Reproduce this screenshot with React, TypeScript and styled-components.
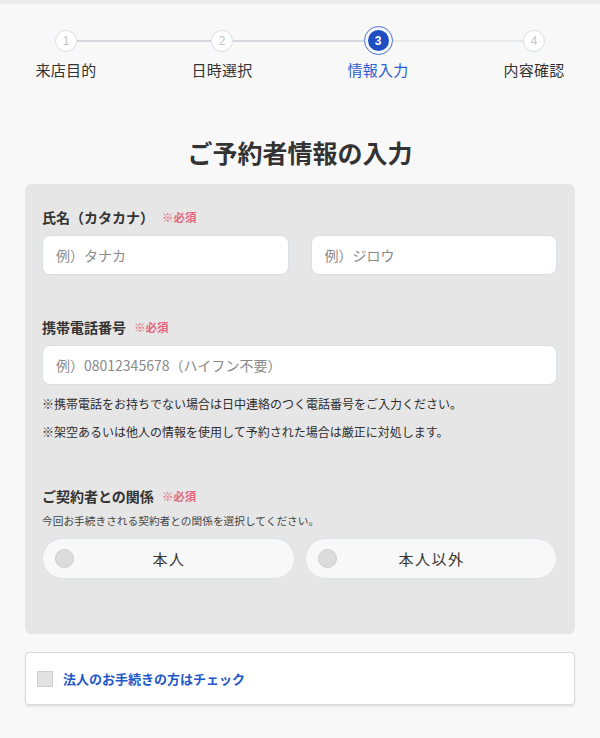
import styled, { createGlobalStyle, css } from "styled-components";

const GlobalStyle = createGlobalStyle`
  html, body {
    margin: 0;
    padding: 0;
    background: #f8f8f8;
    overflow-x: hidden;
  }
  body {
    font-family: "Noto Sans CJK JP", "Noto Sans", sans-serif;
    color: #333;
  }
  * {
    box-sizing: border-box;
  }
`

const steps = [ '来店目的', '日時選択', '情報入力', '内容確認' ]
const current = 3

const Page = styled.div`
  min-height: 738px;
  background: #f8f8f8;
  padding-bottom: 34px;
`

const TopBar = styled.div`
  height: 4px;
  background: #ebebeb;
`

const Stepper = styled.ol`
  display: grid;
  grid-template-columns: repeat(4, 156px);
  justify-content: center;
  margin: 0;
  padding: 22px 0 0;
  list-style: none;
`

const Step = styled.li`
  display: flex;
  flex-direction: column;
  align-items: center;
`

const Track = styled.div`
  display: flex;
  align-items: center;
  width: 100%;
  height: 29px;
`

const Line = styled.span<{ tone: 'done' | 'todo' | 'none' }>`
  flex: 1;
  height: 2px;
  background: ${({ tone }) => tone === 'done' ? '#d4d9df' : tone === 'todo' ? '#e7e8ea' : 'transparent'};
`

const Dot = styled.span<{ active: boolean }>`
  display: inline-flex;
  align-items: center;
  justify-content: center;
  border-radius: 50%;
  font-family: "Liberation Sans", Arial, sans-serif;
  font-size: 12px;
  flex-shrink: 0;

  ${({ active }) => active ? css`
    width: 29px;
    height: 29px;
    padding: 3px;
    border: 1px solid #4b72d8;
    background: #1f4ec3;
    background-clip: content-box;
    color: #fff;
    font-weight: bold;
  ` : css`
    width: 22px;
    height: 22px;
    border: 1.5px solid #d8dfe8;
    background: #fff;
    color: #c4c4c4;
  `}
`

const StepLabel = styled.span<{ active: boolean }>`
  margin-top: 5px;
  font-size: 15px;
  line-height: 20px;
  letter-spacing: 0.2px;
  color: ${({ active }) => active ? '#2b5fcf' : '#333'};
`

const Title = styled.h1`
  margin: 54px 0 14px;
  text-align: center;
  font-size: 25px;
  line-height: 36px;
  font-weight: bold;
  color: #333;
`

const Card = styled.section`
  margin: 0 25px;
  padding: 23px 18px 55px 17px;
  background: #e6e6e6;
  border-radius: 6px;
`

const Field = styled.div<{ gap?: number }>`
  margin-top: ${({ gap }) => gap ?? 0}px;
`

const LabelRow = styled.div`
  display: flex;
  align-items: center;
  gap: 8px;
  height: 20px;
  margin-bottom: 8px;
`

const Label = styled.span`
  font-size: 14px;
  font-weight: bold;
  color: #333;
`

const Required = styled.span`
  font-size: 11.5px;
  font-weight: bold;
  color: #e3677e;
`

const Pair = styled.div<{ gap: number }>`
  display: grid;
  grid-template-columns: 1fr 1fr;
  gap: ${({ gap }) => gap}px;
`

const TextInput = styled.input`
  display: block;
  width: 100%;
  height: 40px;
  padding: 0 13px;
  border: 1px solid #d9dfe6;
  border-radius: 8px;
  background: #fff;
  font-family: inherit;
  font-size: 14px;
  color: #333;
  outline: none;

  &::placeholder {
    color: #8a8a8a;
  }
`

const Note = styled.p`
  margin: 10px 0 0;
  font-size: 12px;
  line-height: 18px;
  color: #2e2e2e;
`

const Hint = styled.p`
  margin: -1px 0 9px;
  font-size: 10.7px;
  line-height: 16px;
  color: #444;
`

const Choice = styled.label`
  display: grid;
  grid-template-columns: 1fr auto 1fr;
  align-items: center;
  height: 41px;
  padding: 0 12px;
  border: 1px solid #dde2e8;
  border-radius: 21px;
  background: #f8f8f8;
  cursor: pointer;
`

const Radio = styled.span`
  width: 19px;
  height: 19px;
  border-radius: 50%;
  background: #dcdcdc;
  border: 1px solid #cdcdcd;
`

const ChoiceText = styled.span`
  font-size: 15px;
  letter-spacing: 1.5px;
  margin-right: -1.5px;
  color: #333;
`

const Corporate = styled.label`
  display: flex;
  align-items: center;
  gap: 10px;
  height: 53px;
  margin: 18px 25px 0;
  padding: 0 11px;
  background: #fff;
  border: 1px solid #d9d9d9;
  border-radius: 4px;
  box-shadow: 0 2px 2px rgba(0, 0, 0, 0.08);
  cursor: pointer;
`

const CheckBox = styled.span`
  width: 16px;
  height: 16px;
  background: #e2e2e2;
  border: 1px solid #cfcfcf;
`

const CorporateText = styled.span`
  font-size: 13px;
  font-weight: bold;
  color: #2157c9;
`

export default function App() {
  return (
    <Page>
      <GlobalStyle/>
      <TopBar/>

      <Stepper>
        {steps.map((name, index) => {
          const n = index + 1
          const active = n === current
          return (
            <Step key={name}>
              <Track>
                <Line tone={index === 0 ? 'none' : n <= current ? 'done' : 'todo'}/>
                <Dot active={active}>{n}</Dot>
                <Line tone={n === steps.length ? 'none' : n < current ? 'done' : 'todo'}/>
              </Track>
              <StepLabel active={active}>{name}</StepLabel>
            </Step>
          )
        })}
      </Stepper>

      <Title>ご予約者情報の入力</Title>

      <Card>
        <Field>
          <LabelRow>
            <Label>氏名（カタカナ）</Label>
            <Required>※必須</Required>
          </LabelRow>
          <Pair gap={22}>
            <TextInput placeholder="例）タナカ"/>
            <TextInput placeholder="例）ジロウ"/>
          </Pair>
        </Field>

        <Field gap={42}>
          <LabelRow>
            <Label>携帯電話番号</Label>
            <Required>※必須</Required>
          </LabelRow>
          <TextInput placeholder="例）08012345678（ハイフン不要）"/>
          <Note>※携帯電話をお持ちでない場合は日中連絡のつく電話番号をご入力ください。</Note>
          <Note>※架空あるいは他人の情報を使用して予約された場合は厳正に対処します。</Note>
        </Field>

        <Field gap={45}>
          <LabelRow>
            <Label>ご契約者との関係</Label>
            <Required>※必須</Required>
          </LabelRow>
          <Hint>今回お手続きされる契約者との関係を選択してください。</Hint>
          <Pair gap={10}>
            <Choice>
              <Radio/>
              <ChoiceText>本人</ChoiceText>
            </Choice>
            <Choice>
              <Radio/>
              <ChoiceText>本人以外</ChoiceText>
            </Choice>
          </Pair>
        </Field>
      </Card>

      <Corporate>
        <CheckBox/>
        <CorporateText>法人のお手続きの方はチェック</CorporateText>
      </Corporate>
    </Page>
  )
}
